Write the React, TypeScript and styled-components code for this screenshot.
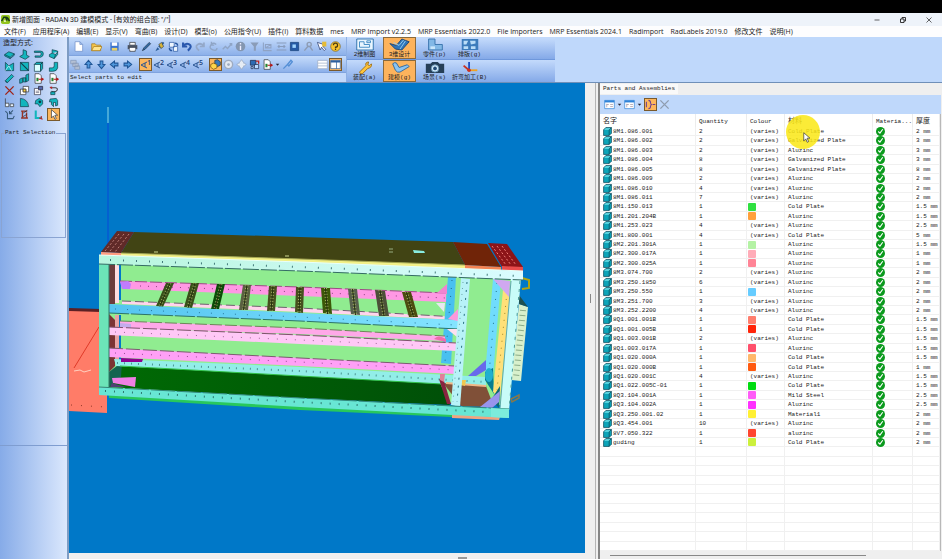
import React from "react";
import styled, { createGlobalStyle, css } from "styled-components";

const ui = `"Open Sans", "Noto Sans CJK SC", sans-serif`;
const mono = `"Liberation Mono", "Noto Sans CJK SC", monospace`;

const GlobalStyle = createGlobalStyle`
  *, *::before, *::after { box-sizing: border-box; }
  html, body, #root { height: 100%; }
  body { margin: 0; background: #000; overflow: hidden; }
  button { font: inherit; color: inherit; margin: 0; padding: 0; border: 0; background: none; }
  svg { display: block; }
`;

/* ---------- window frame ---------- */

const Window = styled.div`
  display: flex;
  flex-direction: column;
  height: 100vh;
  padding-top: 13px;
  font-family: ${ui};
  font-size: 7px;
  line-height: 10px;
  color: #222;
`;

const TitleBar = styled.header`
  display: flex;
  align-items: center;
  flex: none;
  height: 13px;
  padding-left: 1px;
  gap: 2px;
  background: #eef3fa;
`;

const Title = styled.h1`
  flex: 1;
  margin: 0;
  font-family: Roboto, "Noto Sans CJK SC", sans-serif;
  font-size: 7px;
  font-weight: 400;
  white-space: nowrap;
`;

const WindowControls = styled.div`
  display: flex;
`;

const WindowButton = styled.button`
  display: grid;
  place-items: center;
  width: 26px;
  height: 13px;
`;

const MenuBar = styled.nav`
  display: flex;
  align-items: center;
  flex: none;
  height: 11px;
  padding-left: 4px;
  gap: 7px;
  background: #fdfdfe;
  white-space: nowrap;
`;

const MenuItem = styled.button`
  flex: none;
  white-space: nowrap;
`;

const Body = styled.div`
  display: flex;
  flex: 1;
  min-height: 0;
`;

/* ---------- left palette ---------- */

const Sidebar = styled.aside`
  display: flex;
  flex-direction: column;
  flex: none;
  width: 69px;
  background: linear-gradient(90deg, #86abe8, #dbe8fd);
  border-right: 2px solid #7d9cc4;
`;

const PaletteTitle = styled.h2`
  margin: 1px 0 0 3px;
  font-size: 7px;
  line-height: 10px;
  font-weight: 400;
`;

const Palette = styled.div`
  display: grid;
  grid-template-columns: repeat(4, 1fr);
  grid-auto-rows: 12px;
  padding: 0 6px 0 2px;
`;

const ToolButton = styled.button<{ $on?: boolean; $w?: number }>`
  display: grid;
  place-items: center;
  justify-self: center;
  flex: none;
  width: ${(p) => p.$w ?? 13}px;
  height: 13px;
  ${(p) =>
    p.$on &&
    css`
      background: #fdb65c;
      border: 1px solid #7a5a2c;
    `}
`;

const SelectionGroup = styled.fieldset`
  height: 109px;
  margin: 9px 1px 0 1px;
  padding: 0;
  border: 1px solid #8aa4d2;
  min-width: 0;
`;

const SelectionLegend = styled.legend`
  margin-left: 2px;
  padding: 0 1px;
  font-family: ${mono};
  font-size: 6px;
  line-height: 8px;
  white-space: nowrap;
`;

const SidebarPane = styled.div`
  flex: 208 1 0;
  border-bottom: 1px solid #7f9dd0;
`;

const SidebarFoot = styled.div`
  flex: 114 1 0;
`;

/* ---------- toolbars ---------- */

const Main = styled.main`
  display: flex;
  flex-direction: column;
  flex: 1;
  min-width: 0;
`;

const Ribbon = styled.div`
  display: flex;
  flex: none;
  height: 46px;
  background: #bfd8fb;
  border-bottom: 1px solid #6f8fb8;
`;

const ToolbarStack = styled.div`
  display: flex;
  flex-direction: column;
  width: 277px;
`;

const Toolbar = styled.div<{ $h: number }>`
  display: flex;
  align-items: center;
  height: ${(p) => p.$h}px;
  background: linear-gradient(180deg, #c6dcfb, #8cb0ea);
  border-bottom: 1px solid #7fa3de;
`;

const ToolSpread = styled.div`
  display: flex;
  justify-content: space-between;
  flex: 1;
  padding: 0 4px 0 3px;
`;

const Gap = styled.span<{ $w?: number }>`
  ${(p) => (p.$w ? `width: ${p.$w}px; flex: none;` : "flex: 1;")}
`;

const Prompt = styled.output`
  flex: 1;
  padding-left: 1px;
  background: #c3d9fb;
  font-family: ${mono};
  font-size: 6px;
  line-height: 9px;
  white-space: nowrap;
`;

const ModeGrid = styled.div`
  display: grid;
  grid-template-columns: repeat(4, 33px);
  grid-template-rows: 1fr 1fr;
  column-gap: 2px;
  width: 209px;
  padding-left: 1px;
  border-left: 1px solid #8eb0e4;
  background: linear-gradient(180deg, #c2d9fb 0 4%, #84a9e8 49%, #6f98dc 50%, #c2d9fb 52%, #84a9e8);
`;

const ModeButton = styled.button<{ $on?: boolean }>`
  display: flex;
  flex-direction: column;
  align-items: center;
  justify-content: center;
  height: 22px;
  font-family: ${mono};
  font-size: 6px;
  line-height: 7px;
  white-space: nowrap;
  border: 1px solid ${(p) => (p.$on ? "#8a6a3c" : "transparent")};
  background: ${(p) => (p.$on ? "#fdb35c" : "none")};
`;

/* ---------- work area ---------- */

const WorkArea = styled.div`
  display: flex;
  flex: 1;
  min-height: 0;
  background: #efefef;
`;

const ViewColumn = styled.section`
  display: flex;
  flex-direction: column;
  flex: 516 1 0;
  min-width: 0;
`;

const Viewport = styled.div`
  flex: 1;
  min-height: 0;
  background: #0078c8;

  svg { width: 100%; height: 100%; }
`;

const BottomGrip = styled.div`
  display: flex;
  align-items: flex-end;
  justify-content: center;
  flex: none;
  height: 6px;
  padding-left: 270px;

  &::after { content: ""; width: 9px; height: 2px; background: #999; }
`;

const SideGrip = styled.div`
  display: flex;
  align-items: center;
  justify-content: center;
  flex: none;
  width: 11px;
  padding-bottom: 46px;
  border-right: 1px solid #b4b4b4;

  &::after { content: ""; width: 1px; height: 9px; background: #888; }
`;

const PartsPanel = styled.section`
  display: flex;
  flex-direction: column;
  flex: 341 1 0;
  min-width: 0;
  margin-left: 2px;
  padding-right: 1px;
  border-left: 2px solid #858585;
`;

const TabStrip = styled.div`
  flex: none;
  height: 12px;
  padding-top: 1px;
`;

const Tab = styled.h2`
  display: inline-block;
  margin: 0;
  padding: 0 3px;
  background: #f9f9f9;
  font-family: ${mono};
  font-size: 6px;
  font-weight: 400;
  line-height: 10px;
  vertical-align: top;
`;

const PanelToolbar = styled.div`
  display: flex;
  align-items: center;
  flex: none;
  height: 19px;
  padding-left: 3px;
  background: #bfd8fb;
`;

const Table = styled.table`
  display: flex;
  flex-direction: column;
  flex: 1;
  min-height: 0;
  background: #fff;
  border-right: 1px solid #b8b8b8;
  font-family: ${mono};
  font-size: 6px;
  line-height: 9px;
  color: #222;
`;

const Head = styled.thead`
  display: block;
  flex: none;
`;

const Rows = styled.tbody`
  display: grid;
  grid-auto-rows: minmax(0, 1fr);
  flex: 1;
  min-height: 0;
`;

const columns = css`
  display: grid;
  grid-template-columns: 96fr 51fr 38fr 88fr 40fr 27fr;
`;

const HeadRow = styled.tr`
  ${columns}
  height: 13px;
`;

const Row = styled.tr`
  ${columns}
  border-bottom: 1px solid #f0f0f0;
`;

const HeadCell = styled.th`
  padding: 3px 0 0 3px;
  border-right: 1px solid #ececec;
  font-weight: 400;
  text-align: left;
  white-space: nowrap;
`;

const CjkLabel = styled.span`
  font-size: 7px;
`;

const Cell = styled.td`
  display: flex;
  align-items: center;
  gap: 1px;
  position: relative;
  min-width: 0;
  padding: 0 0 0 3px;
  border-right: 1px solid #f0f0f0;
  white-space: nowrap;
`;

const Swatch = styled.span<{ $c: string }>`
  width: 8px;
  height: 8px;
  margin-left: -2px;
  border-radius: 1px;
  background: ${(p) => p.$c};
`;

const ClickHalo = styled.span`
  position: absolute;
  z-index: 1;
  left: 1px;
  top: -12px;
  width: 34px;
  height: 34px;
  border-radius: 50%;
  background: rgba(250, 232, 20, 0.85);

  svg { position: absolute; left: 16px; top: 17px; }
`;

const ScrollTrack = styled.div`
  flex: none;
  height: 8px;
  padding: 4px 75px 0 10px;

  &::after { content: ""; display: block; height: 1px; background: #888; }
`;

/* ---------- icons ---------- */

const T = "#12b5bd";
const D = "#123c48";
const teal = { fill: T, stroke: D, strokeWidth: 1 };
const line = (c: string, w = 2) => ({ fill: "none", stroke: c, strokeWidth: w });

const glyphs: Record<string, React.ReactNode> = {
  plate: <path d="M1 8l6-4 8 3-6 5zM1 8v2l8 4v-2M9 14l6-5V7" {...teal} />,
  angle: <path d="M6 1l5 2v6l4 2-6 4-8-4 5-3z" {...teal} />,
  channel: <path d="M2 3h9q4 0 4 4t-4 5H3v-2h7q2-1 2-3t-2-2H2z" {...teal} />,
  fold: <path d="M6 1l8 2v5l-5 6-7-3v-3l4-2z M6 6l5 2 3-4M11 8l-2 6" {...teal} />,
  corner: <><path d="M2 2l5 5 7-4v11H2z" {...teal} /><path d="M2 14l5-7 4 7" {...line("#e7ffff", 1)} /></>,
  square: <><path d="M2 2h12v12H2z" {...teal} /><path d="M2 2l12 12" {...line(D, 1.5)} /></>,
  box: <><path d="M2 5l3-3h9l-3 3v10H2z" fill="#dff" stroke={D} /><path d="M2 5l3-3h9l-3 3zM11 5l3-3v9l-3 4z" {...teal} /></>,
  elbow: <path d="M9 2h5v8q-1 5-7 5H2v-5h4q3 0 3-3z" {...teal} />,
  tube: <path d="M2 11l9-9 3 3-9 9zM2 11q0 3 3 3" {...teal} />,
  blocks: <path d="M1 9l4-2v7l-4 1zM6 7h4v6H6zM10 3l4-2v10l-4 2z" {...teal} />,
  docout: <><path d="M3 1h6l3 3v11H3z" fill="#fff" stroke="#333" /><path d="M5 7h3v5H5z" fill="#283" /><path d="M8 9h6M12 7l3 2-3 2" {...line("#b21616", 1.5)} /></>,
  redx: <path d="M2 2l12 12M14 2L2 14" {...line("#a02318", 2)} />,
  overlap: <><path d="M2 6h8v8H2zM6 2h8v8H6z" fill="#fff" stroke="#333" /><path d="M6 6h4v4H6z" fill="#ffd23a" stroke="#333" /></>,
  props: <><path d="M2 5h9v9H2z" fill="#fff" stroke="#334" /><path d="M8 2h6v5H8z" fill="#56a" stroke="#223" /><path d="M4 9h5M4 11h5" {...line("#667", 1)} /></>,
  link: <><path d="M3 4h8q4 1 2 4t-8 1" {...line("#444", 1.5)} /><path d="M4 10h6v4H4z" {...teal} /><path d="M2 3l4-1v4z" fill="#b22" /></>,
  tri: <path d="M2 2v12h5V9H2M9 10h5v4H9z" fill="#e8f4ff" stroke="#333" />,
  quarter: <path d="M2 2q11 1 12 12H2z" {...teal} />,
  hex: <><path d="M4 5l5-3 5 3v5l-4 4-3-4H3z" {...teal} /><circle cx="10" cy="7" r="2" fill={D} /></>,
  hook: <path d="M3 3l9-1 2 3v7l-3 1V8H8v6l-3-3V7H2z" {...teal} />,
  unfold: <path d="M2 3l3 3v8h8l2-4M13 2L8 7M8 3v4h4" {...line("#36597a", 1.5)} />,
  redtool: <><path d="M3 3h9M5 3v10M3 13h10M11 5v8" {...line("#973427", 2)} /><path d="M6 6l6-4M6 11l5-3" {...line("#222", 1)} /></>,
  axis: <><path d="M4 2v11h9" {...line(T, 3)} /><path d="M9 13l5 2M12 10v4" {...line("#b22", 1.5)} /></>,
  cursor: <path d="M5 1v12l3-3 2 5 2-1-2-5h4z" fill="#fff" stroke="#333" />,
  new: <path d="M3 1h7l4 4v10H3zM10 1v4h4" fill="#fff" stroke="#6d8dc8" />,
  open: <><path d="M1 4h5l2 2h6v8H1z" fill="#f7c64a" stroke="#a47818" /><path d="M1 14l3-6h12l-3 6z" fill="#ffe48c" stroke="#a47818" /></>,
  save: <><path d="M2 2h12v12H2z" fill="#3b73cf" /><path d="M4 2h8v5H4z" fill="#fff" /><path d="M4 10h8v4H4z" fill="#e8d067" /></>,
  print: <><path d="M4 2h8v4H4zM4 10h8v5H4z" fill="#fff" stroke="#333" /><path d="M1 6h14v6H1z" fill="#4a5260" /><path d="M4 10h8v3H4z" fill="#fff" /></>,
  pencil: <path d="M2 14l2-4 8-8 2 2-8 8z" fill="#2f6aa8" stroke="#234" />,
  brush: <><path d="M2 15l3-6 3 3zM6 8l7-7 2 2-6 7z" fill="#2c5e98" /><path d="M7 5l4-3 3 6-4 3z" fill="#d8b438" stroke="#345" /></>,
  swap: <><path d="M2 2h7v7H2zM8 8h6v7H8z" fill="#eef6ff" stroke="#2756a0" /><path d="M10 3q4 0 4 4M6 14q-4 0-4-4" {...line("#2756a0")} /></>,
  undo: <path d="M3 2v6h6M3 8q4-6 9-3t-2 9" {...line("#2a58ad", 3)} />,
  redo: <path d="M13 2v6H7M13 8Q9 2 4 5t2 9" {...line("#94a8c8", 2.5)} />,
  cycle: <path d="M12 5Q7 1 4 6t3 7 6-3M5 1v5h4" {...line("#8fa5c6")} />,
  path: <path d="M1 12l4-4 3 3 6-7M11 4h3v3" {...line("#8fa5c6")} />,
  info: <><circle cx="8" cy="8" r="7" fill="#8496b0" /><path d="M8 7v6M8 3v2" {...line("#eef")} /></>,
  filter: <path d="M2 2h12L10 8v6H7V8z" fill="#8a9cb8" />,
  frame: <path d="M2 2v12h12M5 5h8v5H5zM5 10l8-5" {...line("#8fa3c4", 1.5)} />,
  spread: <path d="M1 3h14M1 13h14M3 8h10M5 6L3 8l2 2M11 6l2 2-2 2" {...line("#889cbc", 1.5)} />,
  inset: <><path d="M2 2h12v12H2z" fill="#2459a5" stroke="#164078" /><path d="M5 5h5v5H5z" fill="#9fd4ff" /></>,
  person: <path d="M9 2a3 3 0 010 6 3 3 0 010-6M7 8l-5 6M10 8l4 6" {...line("#8d9cb4")} />,
  pointhelp: <><path d="M2 2l4 11 2-4 4 5 2-2-4-4 4-2z" fill="#fff" stroke="#236" /><path d="M9 1h6v7H9z" fill="#e6bb35" /></>,
  help: <><circle cx="8" cy="8" r="7" fill="#f8c42d" stroke="#7d6422" /><path d="M5 6q0-3 3-3t3 3-3 3v1M8 11v2" {...line("#4a3a10", 1.8)} /></>,
  layers: <path d="M1 2h8v5H1zM4 6h8v5H4zM7 10h7v5H7z" fill="#b4c0d4" stroke="#8496b4" />,
  up: <path d="M8 2l5 6h-3v5H6V8H3z" fill="#4f97dc" stroke="#1f5596" strokeWidth="1.5" />,
  down: <path d="M8 14l5-6h-3V3H6v5H3z" fill="#4f97dc" stroke="#1f5596" strokeWidth="1.5" />,
  left: <path d="M2 8l6-5v3h5v4H8v3z" fill="#4f97dc" stroke="#1f5596" strokeWidth="1.5" />,
  right: <path d="M14 8L8 3v3H3v4h5v3z" fill="#4f97dc" stroke="#1f5596" strokeWidth="1.5" />,
  gold: <><path d="M7 2l4-1 4 3v5l-4 2-4-3z" fill="#3878bb" stroke="#234" /><path d="M1 8l4-2 5 2v5l-5 2-4-3z" fill="#ffd548" stroke="#6b4d10" /></>,
  ring: <><circle cx="8" cy="8" r="6" fill="#e3e9f2" stroke="#9eabc0" strokeWidth="2" /><circle cx="8" cy="8" r="2" fill="#9eabc0" /></>,
  move: <path d="M8 1l3 4v1h1l3 2-3 2h-1v1l-3 4-3-4v-1H4L1 8l3-2h1V5z" fill="#e6ecf4" stroke="#98a6bc" />,
  assembly: <><path d="M2 2h8v7H2z" fill="#2d6bb2" stroke="#124" /><path d="M8 8h6v6H8zM3 11h3v3H3z" fill="#b9d9ff" stroke="#124" /><path d="M10 3h4v4" {...line("#b22")} /></>,
  brushlt: <path d="M2 14l6-6M8 8l5-6 2 2-5 6z" {...line("#548fd6", 2)} />,
  rows: <path d="M1 2h14v12H1zM1 6h14M1 10h14" fill="#fff" stroke="#9aabc4" />,
  panes: <><path d="M1 2h14v12H1z" fill="#fff" stroke="#2c5f9f" /><path d="M1 2h14v3H1zM9 5h1v9H9z" fill="#2c5f9f" /></>,
  list: <><path d="M1 2h14v12H1z" fill="#fff" stroke="#2f83d8" /><path d="M1 2h14v3H1z" fill="#2f83d8" /><path d="M4 7v5M4 8h3M9 8h4M9 11h4" {...line("#9c8f9d", 1)} /></>,
  brace: <path d="M2 4v8M5 2q3 0 3 3t2 3q-2 0-2 3t-3 3M11 8h4" {...line("#6c4090", 1.5)} />,
  greyx: <path d="M2 2l12 12M14 2L2 14" {...line("#8f9db0", 2)} />,
  caret: <path d="M4 6h8l-4 5z" fill="#223" />,
  cube: <><path d="M1 5l4-4h10v10l-4 4H1z" fill="#0ca4b8" stroke="#083f50" strokeWidth="1.2" /><path d="M2 5l3-3h9l-3 3z" fill="#6fe0e8" /><path d="M11 15V5l4-4" {...line("#083f50", 1.2)} /></>,
  check: <><circle cx="8" cy="8" r="8" fill="#0b9a1d" /><path d="M4 8l3 3 5-7" {...line("#fff", 2)} /></>,
  logo: <><rect width="16" height="16" rx="3" fill="#94c51c" /><path d="M1 11l4-7h3l3 6M8 4q4-1 7 7" {...line("#173d18", 2.5)} /><path d="M5 12l2-4 2 4" fill="#fff" /></>,
  min: <path d="M3 8h10" {...line("#333", 1.5)} />,
  max: <path d="M3 6h7v7H3zM6 6V3h7v7h-3" {...line("#222", 1.8)} />,
  close: <path d="M3 3l10 10M13 3L3 13" {...line("#333", 1.5)} />,
};

const Icon = ({ name, size = 11 }: { name: string; size?: number }) => (
  <svg width={size} height={size} viewBox="0 0 16 16" aria-hidden="true">
    {glyphs[name]}
  </svg>
);

const ViewNumber = styled.span`
  display: flex;
  align-items: flex-start;
  font-size: 7px;
  font-weight: 600;
  line-height: 7px;
  color: #1c3f78;
`;

const ViewIcon = ({ n }: { n: number }) => (
  <ViewNumber>
    <svg width="7" height="10" viewBox="0 0 7 10" aria-hidden="true">
      <path d="M7 3L1 6l6 3M5 4v4" fill="none" stroke="#2a5592" />
    </svg>
    {n}
  </ViewNumber>
);

const modeArt: Record<string, React.ReactNode> = {
  draft: <><path d="M3 1h18v12H3z" fill="#eaf6ff" stroke="#2a6da8" /><path d="M6 10V4h5v3h6v3zM14 3h4v2h-4z" {...line("#3d88c2", 1)} /></>,
  design: <><path d="M1 6l7 2 6-7 8 3-8 9-7-1z" fill="#2f75b9" stroke="#1c4676" /><path d="M5 5l6 3 5-6M12 12l6-9" {...line("#9dd1ef", 1)} /></>,
  part: <><path d="M5 1h7v6h8v6H5z" fill="#82b8e6" stroke="#3873ac" /><path d="M7 9h5v3H7z" fill="#c9e6fb" /></>,
  nest: <><path d="M3 1h18v12H3z" fill="#3c7cbc" /><path d="M5 3h5l-2 4H5zM12 3h6v3l-5 1zM5 9h5v3H5zM13 9h5v3h-5z" fill="#b9ddf8" /></>,
  wrench: <path d="M6 12l7-7q-1-4 3-4l-1 3 2 1 2-2q1 4-4 5l-6 6q-3 0-3-2z" fill="#ffc53a" stroke="#a06c12" />,
  model: <path d="M4 3q2-2 4-1l3 5 9-3 2 2-10 6q-3 1-5-2z" fill="#8cc4f0" stroke="#2c67a0" />,
  camera: <><path d="M2 3h5l2-2h6l2 2h5v10H2z" fill="#263f58" /><circle cx="12" cy="8" r="4" fill="#d9efff" stroke="#6492b4" /><circle cx="12" cy="8" r="2" fill="#234b76" /></>,
  bend: <><path d="M11 1v9" {...line("#1f4fc2")} /><path d="M11 10l-6-5" {...line("#cc3220")} /><path d="M10 10h10" {...line("#f0a322")} /><circle cx="11" cy="10" r="2" fill="#cc3220" /></>,
};

/* ---------- data ---------- */

const menus = ["文件(F)", "应用程序(A)", "编辑(E)", "显示(V)", "弯曲(B)", "设计(D)", "模型(o)", "公用指令(U)", "插件(I)", "算料数据", "mes", "MRP Import v2.2.5", "MRP Essentials 2022.0", "File Importers", "MRP Essentials 2024.1", "Radimport", "RadLabels 2019.0", "修改文件", "说明(H)"];

const palette = ["plate", "angle", "channel", "fold", "corner", "square", "box", "elbow", "tube", "blocks", "docout", "docout", "redx", "overlap", "props", "link", "tri", "quarter", "hex", "hook", "unfold", "redtool", "axis", "cursor"];

const fileTools = ["new", "open", "save"];
const editTools = ["print", "pencil", "brush", "swap", "undo", "redo", "cycle", "path", "info", "filter", "frame", "spread", "inset", "person", "pointhelp", "help"];

const modes: [string, string, boolean?][] = [
  ["draft", "2维制图"], ["design", "3维设计", true], ["part", "零件(p)"], ["nest", "排版(g)"],
  ["wrench", "装配(a)"], ["model", "建模(g)", true], ["camera", "场景(s)"], ["bend", "折弯加工(B)"],
];

const V = "(varies)";
const parts: [string, number, string, string, string][] = [
  ["8M1.086.001", 2, V, "Cold Plate", "2 mm"],
  ["8M1.086.002", 2, V, "Galvanized Plate", "3 mm"],
  ["8M1.086.003", 2, V, "Aluzinc", "3 mm"],
  ["8M1.086.004", 8, V, "Galvanized Plate", "3 mm"],
  ["8M1.086.005", 8, V, "Galvanized Plate", "8 mm"],
  ["8M1.086.009", 2, V, "Aluzinc", "2 mm"],
  ["8M1.086.010", 4, V, "Aluzinc", "2 mm"],
  ["8M1.086.011", 7, V, "Aluzinc", "2 mm"],
  ["8M1.150.013", 1, "#2fe040", "Cold Plate", "1.5 mm"],
  ["8M1.201.204B", 1, "#ffa03c", "Aluzinc", "1.5 mm"],
  ["8M1.253.023", 4, V, "Aluzinc", "2.5 mm"],
  ["8M1.800.001", 4, V, "Cold Plate", "5 mm"],
  ["8M2.201.301A", 1, "#b4f2a4", "Aluzinc", "1.5 mm"],
  ["8M2.300.017A", 1, "#ffacb8", "Aluzinc", "1 mm"],
  ["8M2.300.025A", 1, "#ff8496", "Aluzinc", "1 mm"],
  ["8M3.074.700", 2, V, "Aluzinc", "2 mm"],
  ["8M3.250.1850", 6, V, "Aluzinc", "2 mm"],
  ["8M3.250.550", 1, "#66ccff", "Aluzinc", "2 mm"],
  ["8M3.251.700", 3, V, "Aluzinc", "2 mm"],
  ["8M3.252.2200", 4, V, "Aluzinc", "2 mm"],
  ["8Q1.001.001B", 1, "#ff7e6e", "Cold Plate", "1.5 mm"],
  ["8Q1.001.005B", 1, "#ff2408", "Cold Plate", "1.5 mm"],
  ["8Q1.003.001B", 2, V, "Aluzinc", "1.5 mm"],
  ["8Q1.003.017A", 1, "#ff506c", "Aluzinc", "1.5 mm"],
  ["8Q1.020.000A", 1, "#ffb86c", "Cold Plate", "1.5 mm"],
  ["8Q1.020.000B", 1, "#ff5a10", "Cold Plate", "1 mm"],
  ["8Q1.020.001C", 4, V, "Aluzinc", "1.5 mm"],
  ["8Q1.022.005C-01", 1, "#00dc10", "Cold Plate", "1.5 mm"],
  ["8Q3.104.001A", 1, "#ff5cf8", "Mild Steel", "2.5 mm"],
  ["8Q3.104.002A", 1, "#ff30ff", "Aluzinc", "2.5 mm"],
  ["8Q3.250.001.02", 1, "#fff034", "Material1", "2 mm"],
  ["8Q3.454.001", 10, V, "Aluzinc", "2 mm"],
  ["8V7.050.322", 1, "#ff4630", "aluzinc", "2 mm"],
  ["guding", 1, "#ccf03c", "Cold Plate", "2 mm"],
];

/* ---------- cabinet model ---------- */

const P = ({ d, c }: { d: string; c: string }) => <polygon points={d} fill={c} />;
const Edge = ({ d, w = 1, c = "#2c4a4a", dash }: { d: string; w?: number; c?: string; dash?: string }) => (
  <polyline points={d} fill="none" stroke={c} strokeWidth={w} strokeDasharray={dash} />
);

const slats = [
  ["166,283 174,283 163,307 156,306", "#38501a"],
  ["191,283 199,283 192,308 184,307", "#38501a"],
  ["217,284 225,284 219,309 211,309", "#0c4c08"],
  ["243,285 251,285 248,310 239,310", "#5a6040"],
  ["269,286 277,286 275,311 267,311", "#46501e"],
  ["296,287 304,287 303,313 295,312", "#46501e"],
  ["321,288 330,288 332,314 323,313", "#3c5808"],
  ["348,289 357,289 360,315 351,314", "#58604c"],
  ["375,290 385,291 389,316 379,316", "#4c5038"],
  ["402,292 411,292 418,317 409,317", "#4c4c10"],
];

const slatAxis = (pts: string) => {
  const [a, b, c, d] = pts.split(" ").map((p) => p.split(",").map(Number));
  return `${(a[0] + b[0]) / 2},${a[1]} ${(c[0] + d[0]) / 2},${c[1]}`;
};

const Cabinet = () => (
  <svg viewBox="69 83 516 470" role="img" aria-label="Cabinet frame assembly">
    <defs>
      <linearGradient id="topRail"><stop stopColor="#b8f6de" /><stop offset="1" stopColor="#dafcff" /></linearGradient>
      <linearGradient id="blueRail"><stop stopColor="#54c4f0" /><stop offset="1" stopColor="#84e4ff" /></linearGradient>
      <linearGradient id="floor"><stop stopColor="#006a04" /><stop offset="1" stopColor="#005008" /></linearGradient>
    </defs>
    <Edge d="108,123 108,250" c="#0848d8" />
    <Edge d="108,107 108,123" c="#8ad8e8" />
    <P d="69,310 101,311 107,395 107,413 69,411" c="#ff7c68" />
    <P d="69,308 101,309 101,312 69,311" c="#5c2024" />
    <Edge d="99,327 74,368" c="#e03a28" />
    <Edge d="74,371 80,370 84,372 91,370" c="#ffd0c0" />
    <Edge d="71,405 106,407" c="#903828" dash="1 9" />
    <P d="511,380 521,381 528,307 519,304" c="#d8f0cc" />
    <Edge d="523,310 516,378" w={6} c="#8cac88" dash="1 4" />
    <P d="519,295 528,307 519,304" c="#1c5050" />
    <path d="M522 278l7 2v8l-7 1" fill="none" stroke="#b0a410" strokeWidth="2" />
    <path d="M511 399l8-4v3l-7 4z" fill="none" stroke="#84784c" strokeWidth="1.500" />

    <P d="109,263 512,277 502,405 109,388" c="#90ec90" />
    <P d="109,264 115,264 115,304 109,304" c="#6c3c3c" />
    <P d="115,265 119,265 119,303 115,303" c="#ffdce0" />
    <P d="119,262 121,262 121,300 119,300" c="#0078c8" />
    <P d="109,314 115,320 115,366 109,372" c="#7c3434" />
    <P d="115,315 119,315 119,360 115,360" c="#e8a4a4" />
    <P d="119,315 121,315 121,360 119,360" c="#0078c8" />
    <P d="121,366 300,376 440,383 450,405 280,397 108,387" c="url(#floor)" />
    <P d="109,372 122,362 121,377 109,387" c="#146450" />
    <P d="114,359 300,367 486,377 486,387 440,384 300,376 116,366" c="#92eee8" />
    <Edge d="120,366 300,376 442,384" c="#30c048" />
    <Edge d="117,363 300,371 485,382" w={2} c="#4c9494" dash="1 6" />
    <P d="121,358 143,359 142,362 121,362" c="#900090" />
    <P d="112,378 136,377 135,387 113,383" c="#f080e4" />
    <P d="112,383 126,387 110,387" c="#504074" />

    <P d="120,281 300,287 446,293 446,302 300,296 125,289" c="#ff98e4" />
    <Edge d="120,281 300,287 446,293" c="#9c4c84" dash="12 3" />
    <Edge d="140,286 300,292 446,298" c="#904080" dash="1 7" />
    <P d="120,282 128,281 131,284 130,289 122,289" c="#c07cfc" />
    <P d="122,301 300,308 457,317 457,320 300,312 122,304" c="#ffd4ec" />
    <Edge d="122,301 300,308 457,317" c="#706070" dash="9 4" />
    {slats.map(([d, c]) => (
      <g key={d}>
        <P d={d} c={c} />
        <Edge d={slatAxis(d)} w={3} c="#a8b468" dash="1 2" />
        <Edge d={slatAxis(d)} c="#24300c" />
      </g>
    ))}
    <P d="448,277 456,277 451,364 441,363" c="#48c0f0" />
    <Edge d="452,280 445,362" c="#206890" dash="1 7" />
    <P d="447,284 437,293 447,294" c="#f084d0" />
    <P d="436,303 445,303 444,312" c="#e8e8f0" />
    <P d="109,304 300,313 458,320 458,329 300,321 109,313" c="url(#blueRail)" />
    <Edge d="109,313 300,321 458,329" c="#2c7468" dash="20 2" />
    <Edge d="115,309 300,317 455,325" c="#2878a0" dash="1 11" />
    <P d="120,321 300,328 445,336 445,341 300,334 120,328" c="#ffa8e8" />
    <Edge d="120,321 300,328 445,336" c="#6c8858" dash="12 3" />
    <P d="120,323 131,324 131,328 120,327" c="#c4acec" />
    <path d="M434 339q4-5 12 0v3z" fill="#f06cac" />
    <P d="109,327 300,335 456,343 456,351 300,344 109,335" c="#ffc8f6" />
    <Edge d="109,327 300,335 456,343" c="#80506c" dash="14 3" />
    <Edge d="115,332 300,340 455,347" c="#a06898" dash="1 8" />
    <P d="109,348 300,358 455,366 455,374 300,366 109,357" c="#ffa0f6" />
    <Edge d="109,348 300,358 455,366" c="#7c5c70" dash="14 3" />
    <Edge d="115,353 300,362 455,370" c="#984c94" dash="1 8" />
    <P d="458,309 448,319 458,321" c="#fc98dc" />
    <P d="447,329 457,329 457,337" c="#fce0f0" />

    <P d="443,383 486,386 494,407 461,406" c="#805038" />
    <Edge d="446,383 486,386" w={2} c="#f0b888" />
    <P d="439,379 444,381 451,404 447,404" c="#882440" />
    <P d="440,374 445,374 444,382 440,380" c="#e08098" />
    <P d="493,279 501,280 493,376 485,375" c="#70dcfc" />
    <Edge d="497,283 489,374" c="#20708c" dash="1 7" />
    <P d="485,372 493,368 494,394 485,380" c="#087c90" />
    <ellipse cx="489" cy="375" rx="4" ry="7" fill="#20b0d0" />
    <P d="503,290 511,290 500,397 493,392" c="#ffe078" />
    <Edge d="507,292 497,390" c="#a08828" dash="1 6" />
    <P d="493,279 510,281 509,297" c="#d0a8f0" />
    <P d="468,376 486,360 486,370 476,376" c="#6868ec" />
    <P d="462,380 466,380 465,386 461,385" c="#f0c850" />
    <P d="461,278 470,279 460,407 451,405" c="#b8f2f8" />
    <Edge d="467,282 457,402" c="#287080" dash="2 6" />
    <Edge d="463,282 453,402" c="#6ca4a8" dash="1 5" />
    <P d="491,400 500,386 499,408" c="#0c6870" />
    <P d="480,407 500,391 499,402 492,408" c="#9894ec" />
    <P d="511,278 521,279 509,411 500,409" c="#c8fcf8" />
    <Edge d="520,281 509,410" c="#4c9c98" dash="3 5" />
    <Edge d="511,281 500,408" c="#60a8a8" />
    <P d="99,263 109,264 109,388 99,387" c="#6ce4b8" />
    <Edge d="109,264 109,388" c="#347868" />

    <P d="134,232 300,237 453,242 465,265 300,259 121,253" c="#414414" />
    <P d="121,253 300,259 465,265 465,269 300,263 121,257" c="#f2f088" />
    <Edge d="121,253 300,259 465,265" c="#a8a850" />
    <P d="117,231 134,232 121,253 101,252" c="#602a28" />
    <Edge d="119,234 105,251" c="#c08078" dash="2 2" />
    <Edge d="124,234 110,251" c="#c08078" dash="2 2" />
    <Edge d="129,234 115,252" c="#c08078" dash="2 2" />
    <P d="101,252 121,253 121,257 101,256" c="#ff9c80" />
    <P d="453,242 487,244 501,267 465,265" c="#702408" />
    <P d="465,265 501,267 501,271 465,269" c="#f48454" />
    <P d="488,243 507,244 523,267 502,267" c="#8c1418" />
    <Edge d="492,246 506,265" c="#f08078" dash="2 2" />
    <Edge d="497,246 511,265" c="#f08078" dash="2 2" />
    <Edge d="502,246 516,265" c="#f08078" dash="2 2" />
    <P d="502,266 523,267 523,272 502,270" c="#e84c4c" />
    <P d="413,250 424,251 425,253 414,253" c="#88ece0" />
    <Edge d="389,249 393,249" c="#98ac80" />
    <Edge d="389,252 393,252" c="#98ac80" />
    <Edge d="154,252 158,252" c="#d0d890" />
    <Edge d="285,256 289,256" c="#d0d890" />

    <P d="99,255 300,262 523,271 523,280 300,271 99,264" c="url(#topRail)" />
    <Edge d="99,255 300,262 523,271" c="#e8fff8" />
    <Edge d="99,264 300,271 523,280" c="#346c64" dash="16 2" />
    <Edge d="110,260 300,267 518,276" w={2} c="#407878" dash="1 12" />
    <P d="109,395 300,406 452,413 452,417 300,410 109,398" c="#28c85c" />
    <P d="452,414 500,417 499,420 452,418" c="#f0a480" />
    <P d="99,387 300,398 509,409 509,418 300,407 99,395" c="#68e6d4" />
    <Edge d="99,387 300,398 509,409" c="#348878" dash="24 2" />
    <Edge d="105,391 300,402 505,413" w={2} c="#2c7870" dash="1 8" />
    <P d="491,408 509,409 509,418 491,417" c="#7cecdc" />
  </svg>
);

/* ---------- screen ---------- */

const Tool = ({ name, on, w }: { name: string; on?: boolean; w?: number }) => (
  <ToolButton type="button" aria-label={name} $on={on} $w={w}><Icon name={name} /></ToolButton>
);

const heads = ["名字", "Quantity", "Colour", "材料", "Materia...", "厚度"];

export default function App() {
  return (
    <>
      <GlobalStyle />
      <Window>
        <TitleBar>
          <Icon name="logo" size={9} />
          <Title>新增图面 - RADAN 3D 建模模式 - [有效的组合图: "/"]</Title>
          <WindowControls>
            {["min", "max", "close"].map((n) => (
              <WindowButton key={n} type="button" aria-label={n}><Icon name={n} size={8} /></WindowButton>
            ))}
          </WindowControls>
        </TitleBar>
        <MenuBar>
          {menus.map((m) => <MenuItem key={m} type="button">{m}</MenuItem>)}
        </MenuBar>
        <Body>
          <Sidebar>
            <PaletteTitle>造型方式:</PaletteTitle>
            <Palette>
              {palette.map((n, i) => <Tool key={i} name={n} on={n === "cursor"} />)}
            </Palette>
            <SelectionGroup><SelectionLegend>Part Selection</SelectionLegend></SelectionGroup>
            <SidebarPane />
            <SidebarFoot />
          </Sidebar>
          <Main>
            <Ribbon>
              <ToolbarStack>
                <Toolbar $h={19}>
                  {fileTools.map((n) => <Tool key={n} name={n} w={18} />)}
                  <ToolSpread>
                    {editTools.map((n) => <Tool key={n} name={n} />)}
                  </ToolSpread>
                </Toolbar>
                <Toolbar $h={17}>
                  {["layers", "up", "down", "left", "right"].map((n) => <Tool key={n} name={n} />)}
                  <Gap $w={5} />
                  {[1, 2, 3, 4, 5].map((n) => (
                    <ToolButton key={n} type="button" $on={n === 1}><ViewIcon n={n} /></ToolButton>
                  ))}
                  <Gap $w={5} />
                  <Tool name="gold" on />
                  {["ring", "move", "assembly", "docout"].map((n) => <Tool key={n} name={n} />)}
                  <Icon name="caret" size={7} />
                  <Tool name="brushlt" />
                  <Gap />
                  <Tool name="rows" />
                  <Tool name="panes" on />
                  <Gap $w={4} />
                </Toolbar>
                <Prompt>Select parts to edit</Prompt>
              </ToolbarStack>
              <ModeGrid>
                {modes.map(([art, label, on]) => (
                  <ModeButton key={art} type="button" $on={on}>
                    <svg width="22" height="13" viewBox="0 0 24 14" aria-hidden="true">{modeArt[art]}</svg>
                    {label}
                  </ModeButton>
                ))}
              </ModeGrid>
            </Ribbon>
            <WorkArea>
              <ViewColumn>
                <Viewport><Cabinet /></Viewport>
                <BottomGrip />
              </ViewColumn>
              <SideGrip />
              <PartsPanel>
                <TabStrip><Tab>Parts and Assemblies</Tab></TabStrip>
                <PanelToolbar>
                  <Tool name="list" />
                  <Icon name="caret" size={7} />
                  <Tool name="list" />
                  <Icon name="caret" size={7} />
                  <Gap $w={1} />
                  <Tool name="brace" on />
                  <Gap $w={1} />
                  <Tool name="greyx" />
                </PanelToolbar>
                <Table>
                  <Head>
                    <HeadRow>
                      {heads.map((h) => (
                        <HeadCell key={h} scope="col">{/[a-z]/.test(h) ? h : <CjkLabel>{h}</CjkLabel>}</HeadCell>
                      ))}
                    </HeadRow>
                  </Head>
                  <Rows>
                    {parts.map(([name, qty, colour, material, thickness], i) => (
                      <Row key={name}>
                        <Cell><Icon name="cube" size={9} />{name}</Cell>
                        <Cell>{qty}</Cell>
                        <Cell>{colour === V ? V : <Swatch $c={colour} />}</Cell>
                        <Cell>
                          {material}
                          {i === 0 && (
                            <ClickHalo>
                              <svg width="9" height="11" viewBox="3 0 12 16" aria-hidden="true">{glyphs.cursor}</svg>
                            </ClickHalo>
                          )}
                        </Cell>
                        <Cell><Icon name="check" size={9} /></Cell>
                        <Cell>{thickness}</Cell>
                      </Row>
                    ))}
                    {Array.from({ length: 11 }, (_, i) => (
                      <Row key={i} aria-hidden="true">
                        {heads.map((h) => <Cell key={h} />)}
                      </Row>
                    ))}
                  </Rows>
                </Table>
                <ScrollTrack />
              </PartsPanel>
            </WorkArea>
          </Main>
        </Body>
      </Window>
    </>
  );
}
